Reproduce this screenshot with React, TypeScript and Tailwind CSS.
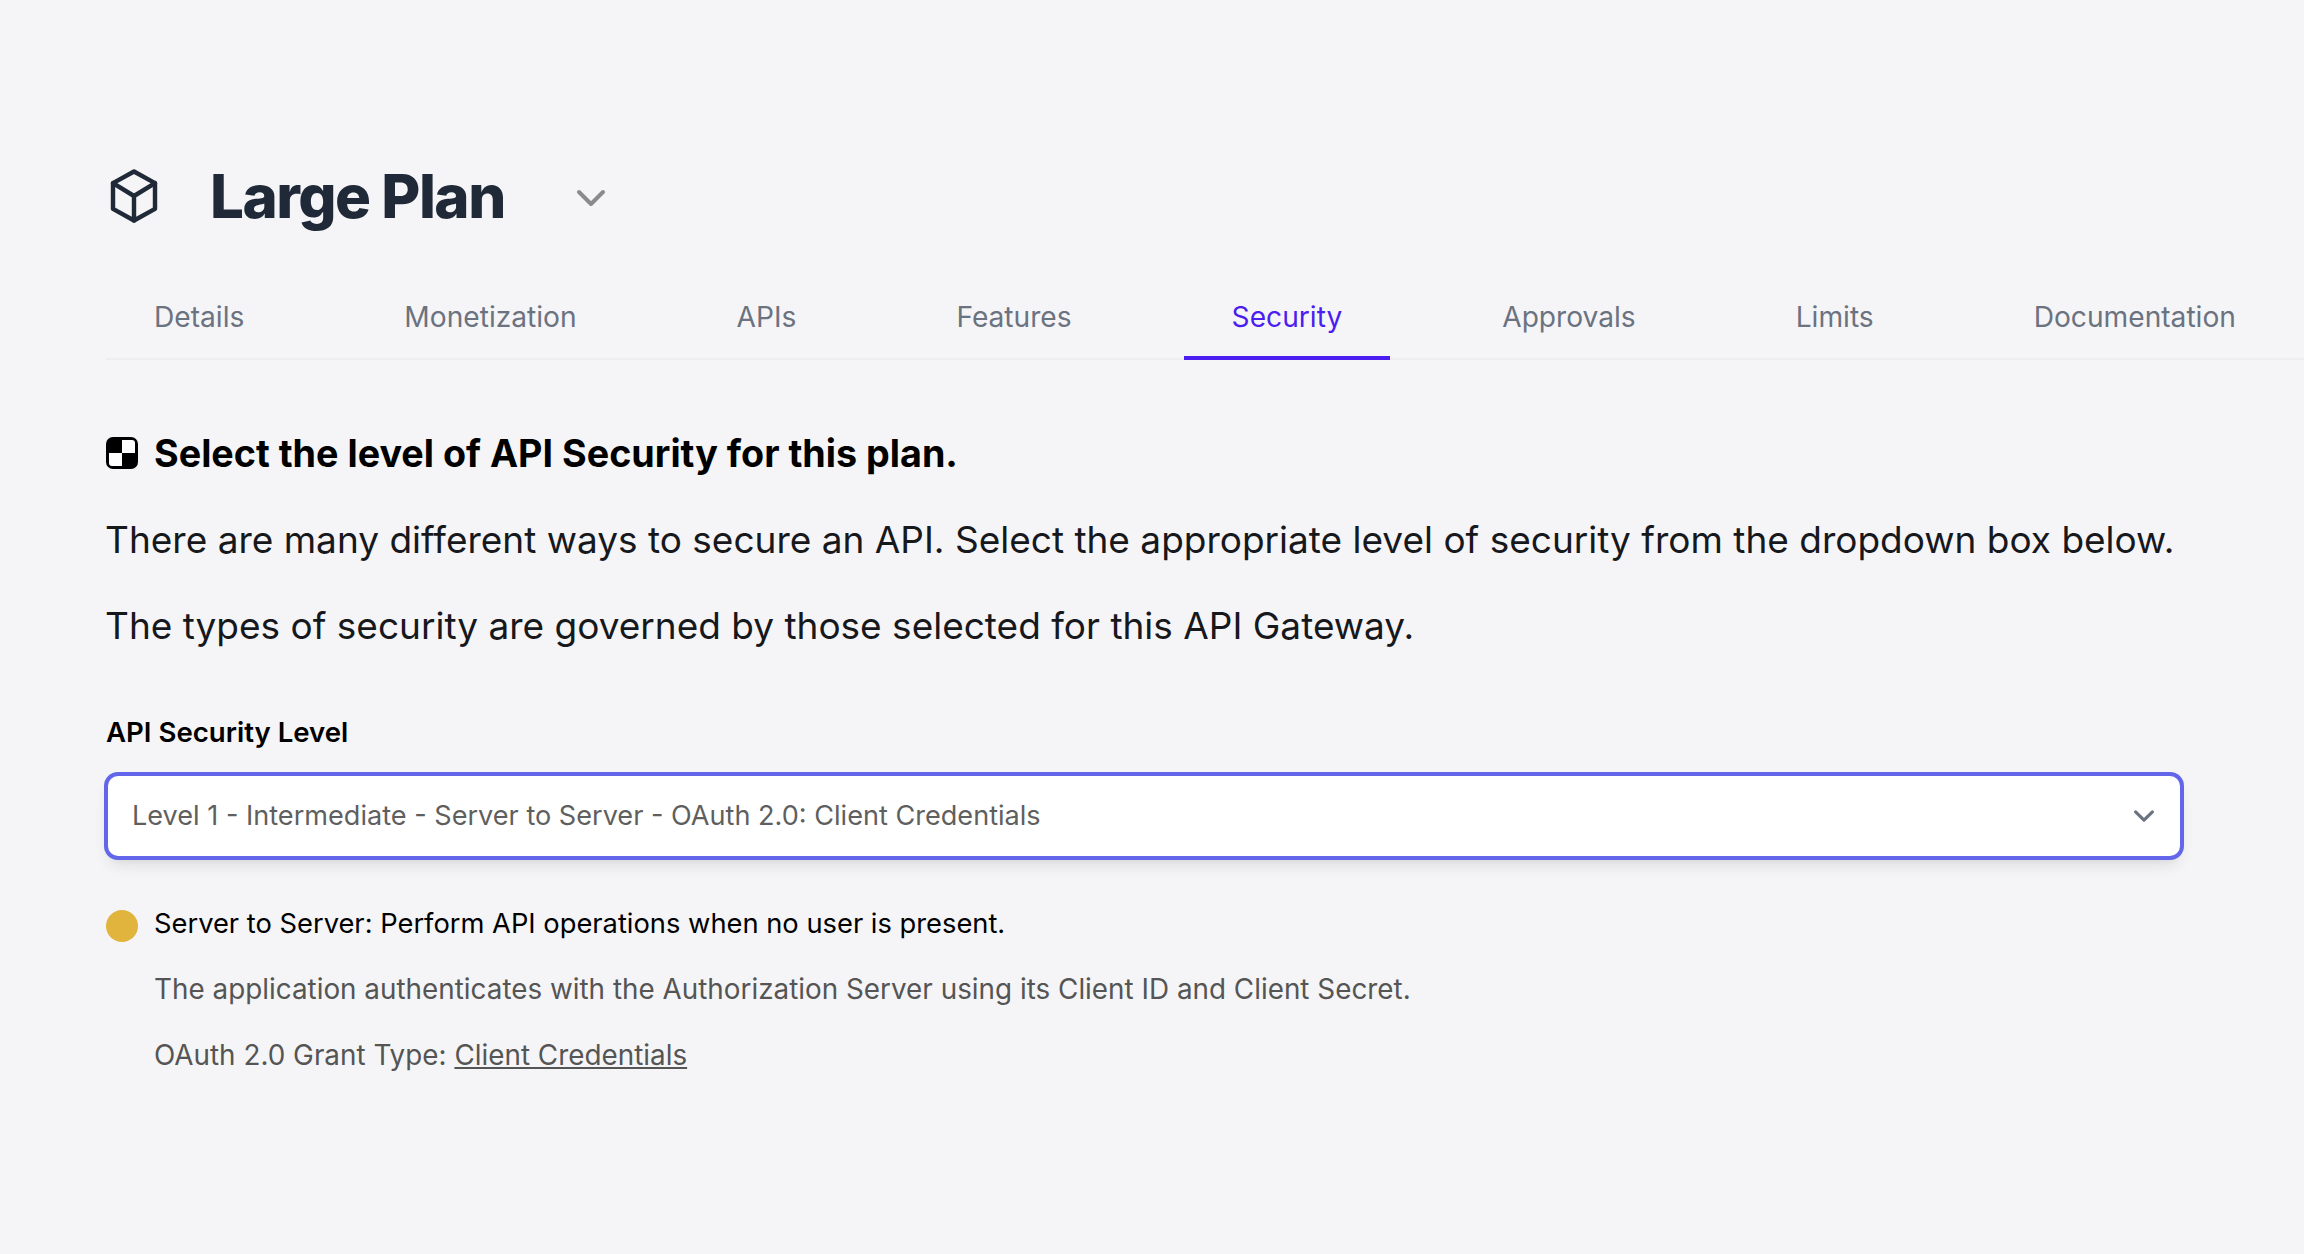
const tabs = ['Details', 'Monetization', 'APIs', 'Features', 'Security', 'Approvals', 'Limits', 'Documentation']

function CubeIcon() {
  return (
    <svg width="56" height="56" viewBox="0 0 24 24" fill="none" stroke="#1f2937" strokeWidth="1.9" strokeLinejoin="round" strokeLinecap="round">
      <path d="M12 1.500 21 6.500V17.500L12 22.500 3 17.500V6.500Z" />
      <path d="M3 6.500 12 12 21 6.500M12 12V22.500" />
    </svg>
  )
}

function CheckerIcon() {
  return (
    <svg width="32" height="32" viewBox="0 0 32 32" className="shrink-0">
      <rect width="32" height="32" rx="7" fill="#000" />
      <path d="M16 3h10a3 3 0 0 1 3 3v10H16z" fill="#fff" />
      <path d="M3 16h13v13H6a3 3 0 0 1-3-3z" fill="#fff" />
    </svg>
  )
}

export default function App() {
  return (
    <div className="min-h-screen bg-[#f5f5f7] pl-[106px] pt-[160px] font-['Inter',sans-serif] overflow-hidden">
      <div className="flex items-center h-[72px]">
        <CubeIcon />
        <h1 className="ml-[48px] -mt-px text-[60px] leading-[72px] font-extrabold tracking-[-0.025em] text-[#1f2937]">Large Plan</h1>
        <svg className="ml-[70px] mt-1" width="32" height="20" viewBox="0 0 32 20" fill="none" stroke="#8b8b8b" strokeWidth="4" strokeLinecap="round" strokeLinejoin="round">
          <path d="M4 4l12 12L28 4" />
        </svg>
      </div>
      <nav className="mt-[64px] flex gap-16 border-b-2 border-[#eeeef0]">
        {tabs.map((t) => (
          <div key={t} className={t === 'Security' ? 'px-12 pb-[18px] text-[28.150px] leading-[42px] whitespace-nowrap text-[#4c1df0] border-b-4 border-[#4c1df0] -mb-0.5' : 'px-12 pb-5 text-[28.150px] leading-[42px] whitespace-nowrap text-[#6b7280]'}>{t}</div>
        ))}
      </nav>
      <div className="mt-[65px] flex items-center gap-4 text-[37.700px] leading-[56px] font-bold text-black">
        <CheckerIcon />
        <span>Select the level of API Security for this plan.</span>
      </div>
      <p className="mt-[31px] -ml-px text-[37px] leading-[56px] text-[#17181c] whitespace-nowrap">There are many different ways to secure an API. Select the appropriate level of security from the dropdown box below.</p>
      <p className="mt-[30px] -ml-px text-[37px] leading-[56px] text-[#17181c]">The types of security are governed by those selected for this API Gateway.</p>
      <div className="mt-[57px] text-[27.600px] leading-[42px] font-semibold text-black">API Security Level</div>
      <div className="mt-[21px] w-[2076px] h-[84px] rounded-xl border-2 border-[#6366ea] ring-2 ring-[#6366ea] shadow-lg bg-white flex items-center justify-between pl-6 pr-[15px] text-[27.100px] text-[#5f5f5f]">
        <span>Level 1 - Intermediate - Server to Server - OAuth 2.0: Client Credentials</span>
        <svg width="42" height="42" viewBox="0 0 20 20" fill="none" stroke="#6b7280" strokeWidth="1.5" strokeLinecap="round" strokeLinejoin="round">
          <path d="M6 8l4 4 4-4" />
        </svg>
      </div>
      <div className="mt-[48px] flex items-center gap-4 text-[27.300px] leading-[42px] text-black">
        <span className="w-8 h-8 rounded-full bg-[#e0b43d]" />
        <span className="-mt-[3px]">Server to Server: Perform API operations when no user is present.</span>
      </div>
      <p className="mt-[23px] ml-12 text-[27.850px] leading-[42px] text-[#555555]">The application authenticates with the Authorization Server using its Client ID and Client Secret.</p>
      <p className="mt-6 ml-12 text-[27.850px] leading-[42px] text-[#555555]">OAuth 2.0 Grant Type: <span className="underline">Client Credentials</span></p>
    </div>
  )
}
